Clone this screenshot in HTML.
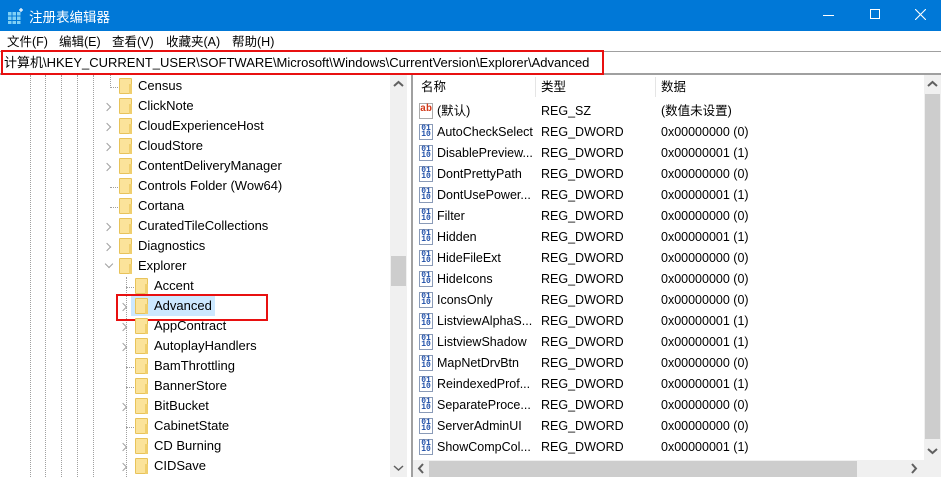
<!DOCTYPE html>
<html><head><meta charset="utf-8"><style>
*{margin:0;padding:0;box-sizing:border-box}
body{width:941px;height:477px;overflow:hidden;background:#fff;font-family:"Microsoft YaHei","Liberation Sans","Noto Sans CJK SC",sans-serif;font-size:12.5px;color:#000;position:relative}
.a{position:absolute;white-space:nowrap}
.title{left:0;top:0;width:941px;height:31px;background:#0078d7;color:#fff}
.menu span{position:absolute;top:31px;font-size:12.5px}
.t{position:absolute;font-size:13px;line-height:20px;height:20px;margin-top:1px}
.f{position:absolute;width:13px;height:16px;background:#fbe39a;border:1px solid #e8c35a;border-radius:1px;margin-top:1px}
.f:after{content:"";position:absolute;right:-1px;bottom:-1px;width:3px;height:10px;background:#f0cf6e}
.chev{position:absolute;width:6px;height:6px;border-right:1.5px solid #a0a0a0;border-top:1.5px solid #a0a0a0;transform:rotate(45deg);margin-top:1px}
.dv{position:absolute;width:0;border-left:1px dotted #a0a0a0}
.dh{position:absolute;height:0;width:8px;border-top:1px dotted #a0a0a0;margin-top:1px}
.r{position:absolute;font-size:12.5px;line-height:21px;height:21px;margin-top:1px}
.ic{position:absolute;width:14px;height:16px;border:1px solid #8a9bb8;background:#fff;font-size:8px;line-height:6px;color:#1f4fa8;font-weight:bold;text-align:center;font-family:"Liberation Mono",monospace;padding-top:1px;margin-top:1px}
</style></head><body>
<div class="a title">
<svg class="a" style="left:8px;top:8px" width="16" height="16" viewBox="0 0 16 16"><g fill="#7fd0f5"><rect x="0" y="4" width="3.5" height="3.5"/><rect x="4.5" y="4" width="3.5" height="3.5"/><rect x="9" y="4" width="3.5" height="3.5"/><rect x="0" y="8.5" width="3.5" height="3.5"/><rect x="4.5" y="8.5" width="3.5" height="3.5"/><rect x="9" y="8.5" width="3.5" height="3.5"/><rect x="0" y="13" width="3.5" height="3"/><rect x="4.5" y="13" width="3.5" height="3"/><rect x="9" y="13" width="3.5" height="3"/></g><path d="M13 0v4M11 2h4" stroke="#fff" stroke-width="1.2"/></svg>
<span class="a" style="left:29px;top:6px;font-size:13.5px">注册表编辑器</span>
<div class="a" style="left:823px;top:15px;width:11px;height:1px;background:#fff"></div>
<div class="a" style="left:870px;top:9px;width:10px;height:10px;border:1px solid #fff"></div>
<svg class="a" style="left:915px;top:9px" width="11" height="11"><path d="M0 0L11 11M11 0L0 11" stroke="#fff" stroke-width="1.1"/></svg>
</div>
<div class="menu"><span style="left:7px">文件(F)</span><span style="left:59px">编辑(E)</span><span style="left:112px">查看(V)</span><span style="left:166px">收藏夹(A)</span><span style="left:232px">帮助(H)</span></div>
<div class="a" style="left:0;top:51px;width:941px;height:1px;background:#a0a0a0"></div>
<div class="a" style="left:0;top:73px;width:941px;height:2px;background:#a0a0a0"></div>
<div class="a" style="left:1px;top:50px;width:603px;height:25px;border:2px solid #e81010"></div>
<span class="a" style="left:4px;top:52px;font-size:13px">计算机\HKEY_CURRENT_USER\SOFTWARE\Microsoft\Windows\CurrentVersion\Explorer\Advanced</span>

<!-- tree -->
<div class="dv" style="left:30px;top:75px;height:402px"></div>
<div class="dv" style="left:45px;top:75px;height:402px"></div>
<div class="dv" style="left:61px;top:75px;height:402px"></div>
<div class="dv" style="left:77px;top:75px;height:402px"></div>
<div class="dv" style="left:93px;top:75px;height:402px"></div>
<div class="dv" style="left:110px;top:75px;height:13px"></div>
<div class="dh" style="left:110px;top:86px"></div>
<div class="dh" style="left:110px;top:186px"></div>
<div class="dh" style="left:110px;top:206px"></div>
<div class="dv" style="left:126px;top:277px;height:200px"></div>
<div class="dh" style="left:126px;top:286px"></div>
<div class="dh" style="left:126px;top:366px"></div>
<div class="dh" style="left:126px;top:386px"></div>
<div class="dh" style="left:126px;top:426px"></div>

<div class="chev" style="left:104px;top:103px"></div>
<div class="chev" style="left:104px;top:123px"></div>
<div class="chev" style="left:104px;top:143px"></div>
<div class="chev" style="left:104px;top:163px"></div>
<div class="chev" style="left:104px;top:223px"></div>
<div class="chev" style="left:104px;top:243px"></div>
<div class="chev" style="left:106px;top:260px;transform:rotate(135deg)"></div>
<div class="chev" style="left:120px;top:303px"></div>
<div class="chev" style="left:120px;top:323px"></div>
<div class="chev" style="left:120px;top:343px"></div>
<div class="chev" style="left:120px;top:403px"></div>
<div class="chev" style="left:120px;top:443px"></div>
<div class="chev" style="left:120px;top:463px"></div>

<div class="f" style="left:119px;top:77px"></div><span class="t" style="left:138px;top:75px">Census</span>
<div class="f" style="left:119px;top:97px"></div><span class="t" style="left:138px;top:95px">ClickNote</span>
<div class="f" style="left:119px;top:117px"></div><span class="t" style="left:138px;top:115px">CloudExperienceHost</span>
<div class="f" style="left:119px;top:137px"></div><span class="t" style="left:138px;top:135px">CloudStore</span>
<div class="f" style="left:119px;top:157px"></div><span class="t" style="left:138px;top:155px">ContentDeliveryManager</span>
<div class="f" style="left:119px;top:177px"></div><span class="t" style="left:138px;top:175px">Controls Folder (Wow64)</span>
<div class="f" style="left:119px;top:197px"></div><span class="t" style="left:138px;top:195px">Cortana</span>
<div class="f" style="left:119px;top:217px"></div><span class="t" style="left:138px;top:215px">CuratedTileCollections</span>
<div class="f" style="left:119px;top:237px"></div><span class="t" style="left:138px;top:235px">Diagnostics</span>
<div class="f" style="left:119px;top:257px"></div><span class="t" style="left:138px;top:255px">Explorer</span>
<div class="f" style="left:135px;top:277px"></div><span class="t" style="left:154px;top:275px">Accent</span>
<div class="a" style="left:131px;top:296px;width:84px;height:20px;background:#cce8ff"></div>
<div class="f" style="left:135px;top:297px"></div><span class="t" style="left:154px;top:295px">Advanced</span>
<div class="a" style="left:116px;top:294px;width:152px;height:27px;border:2px solid #e81010"></div>
<div class="f" style="left:135px;top:317px"></div><span class="t" style="left:154px;top:315px">AppContract</span>
<div class="f" style="left:135px;top:337px"></div><span class="t" style="left:154px;top:335px">AutoplayHandlers</span>
<div class="f" style="left:135px;top:357px"></div><span class="t" style="left:154px;top:355px">BamThrottling</span>
<div class="f" style="left:135px;top:377px"></div><span class="t" style="left:154px;top:375px">BannerStore</span>
<div class="f" style="left:135px;top:397px"></div><span class="t" style="left:154px;top:395px">BitBucket</span>
<div class="f" style="left:135px;top:417px"></div><span class="t" style="left:154px;top:415px">CabinetState</span>
<div class="f" style="left:135px;top:437px"></div><span class="t" style="left:154px;top:435px">CD Burning</span>
<div class="f" style="left:135px;top:457px"></div><span class="t" style="left:154px;top:455px">CIDSave</span>

<!-- tree scrollbar -->
<div class="a" style="left:390px;top:75px;width:17px;height:402px;background:#f0f0f0"></div>
<div class="a" style="left:391px;top:256px;width:15px;height:30px;background:#cdcdcd"></div>
<svg class="a" style="left:393px;top:80px" width="11" height="8"><path d="M1 6L5.5 2L10 6" stroke="#606060" stroke-width="2" fill="none"/></svg>
<svg class="a" style="left:393px;top:464px" width="11" height="8"><path d="M1 2L5.5 6L10 2" stroke="#606060" stroke-width="1.5" fill="none"/></svg>
<div class="a" style="left:411px;top:75px;width:2px;height:402px;background:#a0a0a0"></div>

<!-- list -->
<div class="a" style="left:535px;top:77px;width:1px;height:20px;background:#e5e5e5"></div>
<div class="a" style="left:655px;top:77px;width:1px;height:20px;background:#e5e5e5"></div>
<span class="r" style="left:421px;top:76px">名称</span><span class="r" style="left:541px;top:76px">类型</span><span class="r" style="left:661px;top:76px">数据</span>

<div class="ic" style="left:419px;top:102px;color:#d33a1a;font-size:10px;line-height:12px;border-color:#aaa;padding-top:0">ab</div>
<span class="r" style="left:437px;top:100px">(默认)</span><span class="r" style="left:541px;top:100px">REG_SZ</span><span class="r" style="left:661px;top:100px">(数值未设置)</span>

<div class="ic" style="left:419px;top:123px">01<br>10</div><span class="r" style="left:437px;top:121px">AutoCheckSelect</span><span class="r" style="left:541px;top:121px">REG_DWORD</span><span class="r" style="left:661px;top:121px">0x00000000 (0)</span>
<div class="ic" style="left:419px;top:144px">01<br>10</div><span class="r" style="left:437px;top:142px">DisablePreview...</span><span class="r" style="left:541px;top:142px">REG_DWORD</span><span class="r" style="left:661px;top:142px">0x00000001 (1)</span>
<div class="ic" style="left:419px;top:165px">01<br>10</div><span class="r" style="left:437px;top:163px">DontPrettyPath</span><span class="r" style="left:541px;top:163px">REG_DWORD</span><span class="r" style="left:661px;top:163px">0x00000000 (0)</span>
<div class="ic" style="left:419px;top:186px">01<br>10</div><span class="r" style="left:437px;top:184px">DontUsePower...</span><span class="r" style="left:541px;top:184px">REG_DWORD</span><span class="r" style="left:661px;top:184px">0x00000001 (1)</span>
<div class="ic" style="left:419px;top:207px">01<br>10</div><span class="r" style="left:437px;top:205px">Filter</span><span class="r" style="left:541px;top:205px">REG_DWORD</span><span class="r" style="left:661px;top:205px">0x00000000 (0)</span>
<div class="ic" style="left:419px;top:228px">01<br>10</div><span class="r" style="left:437px;top:226px">Hidden</span><span class="r" style="left:541px;top:226px">REG_DWORD</span><span class="r" style="left:661px;top:226px">0x00000001 (1)</span>
<div class="ic" style="left:419px;top:249px">01<br>10</div><span class="r" style="left:437px;top:247px">HideFileExt</span><span class="r" style="left:541px;top:247px">REG_DWORD</span><span class="r" style="left:661px;top:247px">0x00000000 (0)</span>
<div class="ic" style="left:419px;top:270px">01<br>10</div><span class="r" style="left:437px;top:268px">HideIcons</span><span class="r" style="left:541px;top:268px">REG_DWORD</span><span class="r" style="left:661px;top:268px">0x00000000 (0)</span>
<div class="ic" style="left:419px;top:291px">01<br>10</div><span class="r" style="left:437px;top:289px">IconsOnly</span><span class="r" style="left:541px;top:289px">REG_DWORD</span><span class="r" style="left:661px;top:289px">0x00000000 (0)</span>
<div class="ic" style="left:419px;top:312px">01<br>10</div><span class="r" style="left:437px;top:310px">ListviewAlphaS...</span><span class="r" style="left:541px;top:310px">REG_DWORD</span><span class="r" style="left:661px;top:310px">0x00000001 (1)</span>
<div class="ic" style="left:419px;top:333px">01<br>10</div><span class="r" style="left:437px;top:331px">ListviewShadow</span><span class="r" style="left:541px;top:331px">REG_DWORD</span><span class="r" style="left:661px;top:331px">0x00000001 (1)</span>
<div class="ic" style="left:419px;top:354px">01<br>10</div><span class="r" style="left:437px;top:352px">MapNetDrvBtn</span><span class="r" style="left:541px;top:352px">REG_DWORD</span><span class="r" style="left:661px;top:352px">0x00000000 (0)</span>
<div class="ic" style="left:419px;top:375px">01<br>10</div><span class="r" style="left:437px;top:373px">ReindexedProf...</span><span class="r" style="left:541px;top:373px">REG_DWORD</span><span class="r" style="left:661px;top:373px">0x00000001 (1)</span>
<div class="ic" style="left:419px;top:396px">01<br>10</div><span class="r" style="left:437px;top:394px">SeparateProce...</span><span class="r" style="left:541px;top:394px">REG_DWORD</span><span class="r" style="left:661px;top:394px">0x00000000 (0)</span>
<div class="ic" style="left:419px;top:417px">01<br>10</div><span class="r" style="left:437px;top:415px">ServerAdminUI</span><span class="r" style="left:541px;top:415px">REG_DWORD</span><span class="r" style="left:661px;top:415px">0x00000000 (0)</span>
<div class="ic" style="left:419px;top:438px">01<br>10</div><span class="r" style="left:437px;top:436px">ShowCompCol...</span><span class="r" style="left:541px;top:436px">REG_DWORD</span><span class="r" style="left:661px;top:436px">0x00000001 (1)</span>

<!-- list scrollbars -->
<div class="a" style="left:924px;top:75px;width:17px;height:402px;background:#f0f0f0"></div>
<div class="a" style="left:925px;top:94px;width:15px;height:345px;background:#cdcdcd"></div>
<svg class="a" style="left:927px;top:80px" width="11" height="8"><path d="M1 6L5.5 2L10 6" stroke="#606060" stroke-width="2" fill="none"/></svg>
<svg class="a" style="left:927px;top:447px" width="11" height="8"><path d="M1 2L5.5 6L10 2" stroke="#606060" stroke-width="2" fill="none"/></svg>
<div class="a" style="left:413px;top:460px;width:511px;height:17px;background:#f0f0f0"></div>
<div class="a" style="left:429px;top:461px;width:428px;height:16px;background:#cdcdcd"></div>
<svg class="a" style="left:417px;top:463px" width="8" height="11"><path d="M6 1L2 5.5L6 10" stroke="#606060" stroke-width="2" fill="none"/></svg>
<svg class="a" style="left:910px;top:463px" width="8" height="11"><path d="M2 1L6 5.5L2 10" stroke="#606060" stroke-width="2" fill="none"/></svg>
</body></html>
